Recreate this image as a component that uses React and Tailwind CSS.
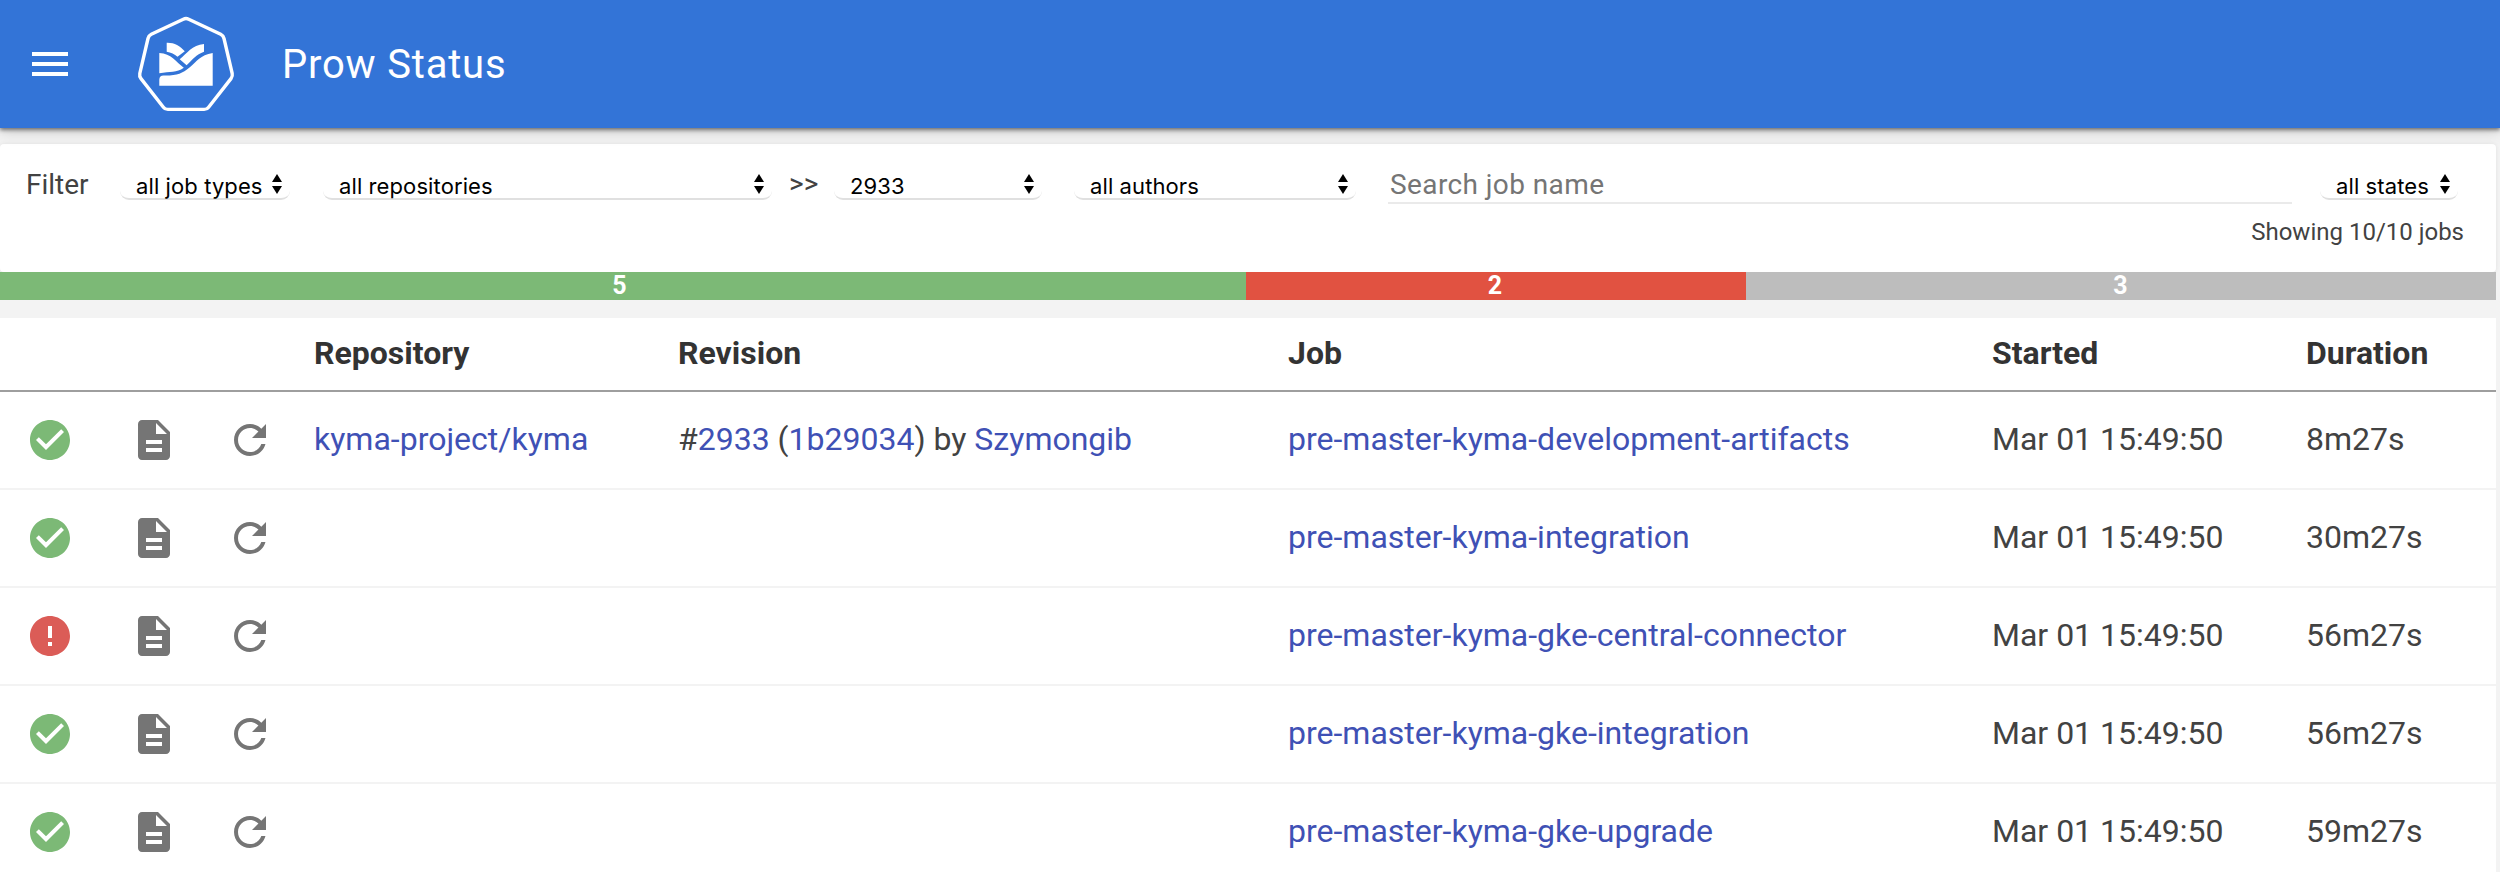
import React from 'react';

const CELLS = 'flex items-center';
const JOBS = [
  { ok: true, repo: 'kyma-project/kyma', rev: true, job: 'pre-master-kyma-development-artifacts', dur: '8m27s' },
  { ok: true, job: 'pre-master-kyma-integration', dur: '30m27s' },
  { ok: false, job: 'pre-master-kyma-gke-central-connector', dur: '56m27s' },
  { ok: true, job: 'pre-master-kyma-gke-integration', dur: '56m27s' },
  { ok: true, job: 'pre-master-kyma-gke-upgrade', dur: '59m27s' },
];
const GRID = 'grid grid-cols-[314px_364px_610px_704px_314px_190px]';
const LINK = 'text-[#3f51b5]';

function Icon({ d, className }) {
  return (
    <svg viewBox="0 0 24 24" fill="currentColor" className={`size-12 shrink-0 ${className}`}>
      <path d={d} />
    </svg>
  );
}
const CHECK = 'M12 2C6.48 2 2 6.48 2 12s4.48 10 10 10 10-4.48 10-10S17.520 2 12 2zm-2 15l-5-5 1.410-1.410L10 14.170l7.590-7.590L19 8l-9 9z';
const ERROR = 'M12 2C6.480 2 2 6.480 2 12s4.480 10 10 10 10-4.480 10-10S17.520 2 12 2zm1 15h-2v-2h2v2zm0-4h-2V7h2v6z';
const DOC = 'M14 2H6c-1.100 0-1.990.9-1.990 2L4 20c0 1.100.890 2 1.990 2H18c1.100 0 2-.9 2-2V8l-6-6zm2 16H8v-2h8v2zm0-4H8v-2h8v2zm-3-5V3.500L18.500 9H13z';
const REFRESH = 'M17.650 6.350C16.200 4.900 14.210 4 12 4c-4.420 0-7.990 3.580-7.990 8s3.570 8 7.990 8c3.730 0 6.840-2.550 7.730-6h-2.080c-.820 2.330-3.040 4-5.650 4-3.310 0-6-2.690-6-6s2.690-6 6-6c1.660 0 3.140.690 4.220 1.780L13 11h7V4l-2.350 2.350z';
const MENU = 'M3 18h18v-2H3v2zm0-5h18v-2H3v2zm0-7v2h18V6H3z';

function Logo() {
  return (
    <svg viewBox="136 14 100 100" className="size-[100px] shrink-0" fill="#fff">
      <path
        d="M183.300 19.200 Q186 17.900 188.700 19.200 L220.700 34.300 Q223.300 35.600 224 38.500 L232.200 73.500 Q232.800 76.300 231 78.600 L208.600 107.200 Q207 109.400 204.200 109.400 L167.800 109.400 Q165 109.400 163.400 107.200 L141 78.600 Q139.200 76.300 139.800 73.500 L148 38.500 Q148.700 35.600 151.300 34.300 Z"
        fill="none"
        stroke="#fff"
        strokeWidth="3.4"
      />
      <path d="M166.700 42.700 C174 42.400 180 45.800 184.800 51.200 L177.500 56.800 C174.500 54.200 171 52.500 166.700 51.800 Z" />
      <path d="M204 44 V51.700 C196 54.500 192.500 59.500 186.600 65.200 L179.700 59.200 C187 53.500 192 45 204 44 Z" />
      <path d="M159.300 53 C171.500 53.500 175.500 61.500 183.800 67.800 C176.500 73 170 71.500 159.300 73.200 Z" />
      <path d="M212.700 53 V85.700 H159.300 V79.500 Q159.500 75.700 163.500 75.500 C177 75.800 182 73.500 189.500 67.500 C197 61.500 200 55 212.700 53 Z" />
    </svg>
  );
}

function Select({ label, className }) {
  return (
    <div className={`mb-1 flex h-[43px] items-end justify-between rounded-[9px] border-b-2 border-[#e0e0e0] pl-4 pr-2 text-black ${className}`}>
      <span className="font-['Inter','Roboto',sans-serif] text-[22px] leading-[24px] tracking-[0.1px]">{label}</span>
      <svg viewBox="0 0 10 20" className="mb-[4px] h-5 w-[10px]">
        <path d="M0 8 L5 0 L10 8 Z M0 12 L5 20 L10 12 Z" />
      </svg>
    </div>
  );
}

export default function App() {
  return (
    <div className="h-[872px] w-[2500px] overflow-hidden bg-[#f3f3f3] font-['Roboto',sans-serif] text-[#424242]">
      <header className="relative flex h-32 items-center bg-[#3374d7] text-white shadow-[0_2px_4px_rgba(0,0,0,0.5),0_4px_14px_rgba(0,0,0,0.14)]">
        <Icon d={MENU} className="ml-[26px]" />
        <div className="ml-[62px] flex">
          <Logo />
        </div>
        <h1 className="ml-[46px] pt-[2px] text-[40px] tracking-[0.8px]">Prow Status</h1>
      </header>

      <section className="mt-4 h-32 w-[2496px] rounded-[4px] bg-white shadow-[0_0_4px_rgba(0,0,0,0.08)]">
        <div className="flex h-[60px] items-end pl-[26px]">
          <div className="w-[94px] pb-[3px] text-[28px] leading-[32px]">Filter</div>
          <Select label="all job types" className="w-[170px]" />
          <Select label="all repositories" className="ml-[33px] w-[449px]" />
          <div className="ml-[17px] w-[45px] pb-[4px] text-[28px] leading-[32px]">&gt;&gt;</div>
          <Select label="2933" className="w-[208px]" />
          <Select label="all authors" className="ml-[32px] w-[282px]" />
          <div className="ml-[32px] w-[904px] border-b-2 border-[#eaeaea] pb-px pl-[2px] text-[28px] leading-[32px] tracking-[0.4px] text-[#757575]">Search job name</div>
          <Select label="all states" className="ml-[28px] w-[138px]" />
        </div>
        <div className="pr-8 pt-[10px] text-right text-[24px]">Showing 10/10 jobs</div>
      </section>

      <div className="flex h-7 w-[2496px] text-center text-[25px] font-bold leading-7 text-white">
        <div className="w-[1246px] bg-[#7cb976] pr-[7px]">5</div>
        <div className="w-[500px] bg-[#e15241] pr-[2px]">2</div>
        <div className="w-[750px] bg-[#bdbdbd] pr-px">3</div>
      </div>

      <main className="mt-[18px] w-[2496px] bg-white">
        <div className={`${GRID} h-[74px] items-center border-b-2 border-[#9e9e9e] pb-[2px] text-[32px] font-bold text-[#333]`}>
          <span />
          <span>Repository</span>
          <span>Revision</span>
          <span>Job</span>
          <span>Started</span>
          <span>Duration</span>
        </div>
        {JOBS.map((j) => (
          <div key={j.job} className={`${GRID} h-[98px] items-center border-b-2 border-[#f3f3f3] text-[32px]`}>
            <div className={CELLS}>
              <Icon d={j.ok ? CHECK : ERROR} className={j.ok ? 'ml-[26px] text-[#7cb976]' : 'ml-[26px] text-[#db5c57]'} />
              <Icon d={DOC} className="ml-[56px] text-[#757575]" />
              <Icon d={REFRESH} className="ml-[48px] text-[#757575]" />
            </div>
            <span className={`pb-[2px] ${LINK}`}>{j.repo}</span>
            <span className="pb-[2px]">
              {j.rev && (
                <>
                  #<a className={LINK}>2933</a> (<a className={LINK}>1b29034</a>) by <a className={LINK}>Szymongib</a>
                </>
              )}
            </span>
            <span className={`pb-[2px] ${LINK}`}>{j.job}</span>
            <span className="pb-[2px]">Mar 01 15:49:50</span>
            <span className="pb-[2px]">{j.dur}</span>
          </div>
        ))}
      </main>
    </div>
  );
}
